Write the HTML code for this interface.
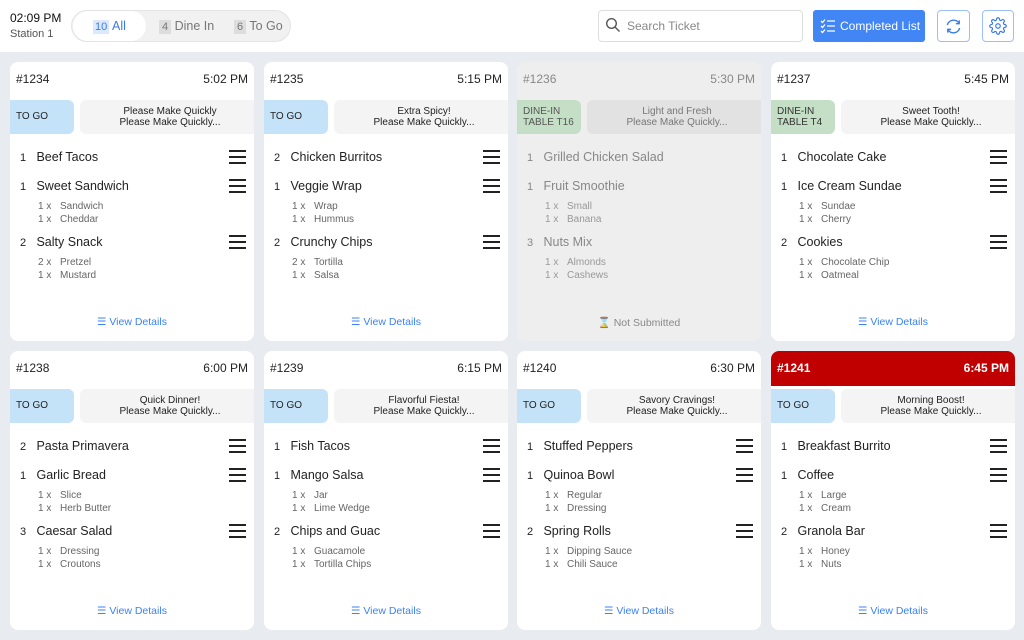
<!DOCTYPE html>
<html><head><meta charset="utf-8"><style>
*{box-sizing:border-box;margin:0;padding:0}
body{width:1024px;height:640px;background:#e8ebef;font-family:"Liberation Sans",sans-serif;position:relative;overflow:hidden;color:#222}
.hdr{position:absolute;left:0;top:0;width:1024px;height:52px;background:#fff}
.a{position:absolute}
.card{position:absolute;width:244px;height:279px;background:#fff;border-radius:8px;overflow:hidden}
.card.dim{background:#eeeeee;color:#888}
.num{position:absolute;left:6px;top:10px;font-size:12px}
.tm{position:absolute;right:6px;top:10px;font-size:12px}
.tag{position:absolute;left:0;top:38px;width:64px;height:34px;background:#c5e3f8;border-radius:0 6px 6px 0;font-size:10px;padding:11px 0 0 6px;color:#222}
.tag.din{background:#c4dfc6;padding:6px 0 0 6px;line-height:11px;color:#333}
.note{position:absolute;left:70px;top:38px;width:180px;height:34px;background:#f4f4f4;border-radius:6px;font-size:10px;text-align:center;line-height:11px;padding-top:6px;color:#222}
.dim .note{background:#e2e2e2;color:#777}
.dim .tag{color:#555}
.it{position:absolute;left:10px;font-size:12.5px;width:228px}
.it b{font-weight:normal;display:inline-block;width:13px;font-size:11px}
.ham{position:absolute;right:8px;width:17px;height:14px;border-top:2px solid #222;border-bottom:2px solid #222}
.ham:after{content:"";position:absolute;left:0;right:0;top:4px;border-top:2px solid #222}
.dim .ham{display:none}
.md{position:absolute;left:28px;font-size:10px;color:#666}
.md span{display:inline-block;width:22px}
.dim .md{color:#999}
.vd{position:absolute;left:0;width:244px;top:254px;text-align:center;font-size:10.5px;color:#3b82f6}
.dim .vd{color:#888}
</style></head><body>
<div class="hdr">
 <div class="a" style="left:10px;top:11px;font-size:12px;color:#111">02:09 PM</div>
 <div class="a" style="left:10px;top:28px;font-size:11px;color:#555">Station 1</div>
 <div class="a" style="left:71px;top:10px;width:220px;height:32px;background:#f1f1f2;border:1px solid #e4e4e4;border-radius:16px"></div>
 <div class="a" style="left:73px;top:11px;width:73px;height:30px;background:#fff;border-radius:15px"></div>
 <div class="a" style="left:93px;top:19px;font-size:12.5px;color:#3b7be8"><span style="background:#dce8fb;font-size:11px;padding:1px 2px">10</span> All</div>
 <div class="a" style="left:159px;top:19px;font-size:12.5px;color:#777"><span style="background:#ddd;font-size:11px;padding:1px 3px">4</span> Dine In</div>
 <div class="a" style="left:234px;top:19px;font-size:12.5px;color:#777"><span style="background:#ddd;font-size:11px;padding:1px 3px">6</span> To Go</div>
 <div class="a" style="left:598px;top:10px;width:205px;height:32px;border:1px solid #ddd;border-radius:4px"></div>
 <svg class="a" style="left:605px;top:17px" width="16" height="16" viewBox="0 0 16 16"><circle cx="6.5" cy="6.5" r="4.8" fill="none" stroke="#555" stroke-width="1.4"/><path d="M10 10l4.5 4.5" stroke="#555" stroke-width="1.4"/></svg>
 <div class="a" style="left:627px;top:19px;font-size:12px;color:#888">Search Ticket</div>
 <div class="a" style="left:813px;top:10px;width:112px;height:32px;background:#4285f4;border-radius:3px;color:#fff;font-size:12px;padding:9px 0 0 27px">Completed List</div>
 <svg class="a" style="left:820px;top:18px" width="16" height="16" viewBox="0 0 16 16" fill="none" stroke="#fff" stroke-width="1.3"><path d="M1 3l1.5 1.5L5 1.5M1 8l1.5 1.5L5 6.5M1 13l1.5 1.5L5 11.5M7 3h8M7 8h8M7 13h8"/></svg>
 <div class="a" style="left:937px;top:10px;width:33px;height:32px;border:1px solid #9cc0f5;border-radius:4px"></div>
 <svg class="a" style="left:944px;top:17px" width="19" height="19" viewBox="0 0 20 20" fill="none" stroke="#3b7be8" stroke-width="1.5"><path d="M3.5 8.5A6.7 6.7 0 0 1 16 7M16.5 11.5A6.7 6.7 0 0 1 4 13M16 3.5V7h-3.5M4 16.5V13h3.5"/></svg>
 <div class="a" style="left:982px;top:10px;width:32px;height:32px;border:1px solid #9cc0f5;border-radius:4px"></div>
 <svg class="a" style="left:989px;top:17px" width="18" height="18" viewBox="0 0 24 24" fill="none" stroke="#3b7be8" stroke-width="1.6"><circle cx="12" cy="12" r="3"/><path d="M19.4 15a1.7 1.7 0 0 0 .3 1.8l.1.1a2 2 0 1 1-2.8 2.8l-.1-.1a1.7 1.7 0 0 0-1.8-.3 1.7 1.7 0 0 0-1 1.5V21a2 2 0 1 1-4 0v-.1a1.7 1.7 0 0 0-1.1-1.500 1.7 1.7 0 0 0-1.8.3l-.1.1a2 2 0 1 1-2.8-2.8l.1-.1a1.7 1.7 0 0 0 .3-1.8 1.7 1.7 0 0 0-1.5-1H3a2 2 0 1 1 0-4h.1a1.7 1.7 0 0 0 1.5-1.1 1.7 1.7 0 0 0-.3-1.8l-.1-.1a2 2 0 1 1 2.8-2.8l.1.1a1.7 1.7 0 0 0 1.8.3H9a1.7 1.7 0 0 0 1-1.5V3a2 2 0 1 1 4 0v.1a1.7 1.7 0 0 0 1 1.5 1.7 1.7 0 0 0 1.8-.3l.1-.1a2 2 0 1 1 2.8 2.8l-.1.1a1.7 1.7 0 0 0-.3 1.8V9a1.7 1.7 0 0 0 1.5 1H21a2 2 0 1 1 0 4h-.1a1.7 1.7 0 0 0-1.5 1z"/></svg>
</div>

<!-- Row 1 -->
<div class="card" style="left:10px;top:62px">
 <div class="num">#1234</div><div class="tm">5:02 PM</div>
 <div class="tag">TO GO</div><div class="note">Please Make Quickly<br>Please Make Quickly...</div>
 <div class="it" style="top:88px"><b>1</b> Beef Tacos</div><div class="ham" style="top:88px"></div>
 <div class="it" style="top:117px"><b>1</b> Sweet Sandwich</div><div class="ham" style="top:117px"></div>
 <div class="md" style="top:139px"><span>1 x</span>Sandwich</div><div class="md" style="top:152px"><span>1 x</span>Cheddar</div>
 <div class="it" style="top:173px"><b>2</b> Salty Snack</div><div class="ham" style="top:173px"></div>
 <div class="md" style="top:195px"><span>2 x</span>Pretzel</div><div class="md" style="top:208px"><span>1 x</span>Mustard</div>
 <div class="vd">☰ View Details</div>
</div>
<div class="card" style="left:264px;top:62px">
 <div class="num">#1235</div><div class="tm">5:15 PM</div>
 <div class="tag">TO GO</div><div class="note">Extra Spicy!<br>Please Make Quickly...</div>
 <div class="it" style="top:88px"><b>2</b> Chicken Burritos</div><div class="ham" style="top:88px"></div>
 <div class="it" style="top:117px"><b>1</b> Veggie Wrap</div><div class="ham" style="top:117px"></div>
 <div class="md" style="top:139px"><span>1 x</span>Wrap</div><div class="md" style="top:152px"><span>1 x</span>Hummus</div>
 <div class="it" style="top:173px"><b>2</b> Crunchy Chips</div><div class="ham" style="top:173px"></div>
 <div class="md" style="top:195px"><span>2 x</span>Tortilla</div><div class="md" style="top:208px"><span>1 x</span>Salsa</div>
 <div class="vd">☰ View Details</div>
</div>
<div class="card dim" style="left:517px;top:62px">
 <div class="num">#1236</div><div class="tm">5:30 PM</div>
 <div class="tag din">DINE-IN<br>TABLE T16</div><div class="note">Light and Fresh<br>Please Make Quickly...</div>
 <div class="it" style="top:88px"><b>1</b> Grilled Chicken Salad</div>
 <div class="it" style="top:117px"><b>1</b> Fruit Smoothie</div>
 <div class="md" style="top:139px"><span>1 x</span>Small</div><div class="md" style="top:152px"><span>1 x</span>Banana</div>
 <div class="it" style="top:173px"><b>3</b> Nuts Mix</div>
 <div class="md" style="top:195px"><span>1 x</span>Almonds</div><div class="md" style="top:208px"><span>1 x</span>Cashews</div>
 <div class="vd">⌛ Not Submitted</div>
</div>
<div class="card" style="left:771px;top:62px">
 <div class="num">#1237</div><div class="tm">5:45 PM</div>
 <div class="tag din">DINE-IN<br>TABLE T4</div><div class="note">Sweet Tooth!<br>Please Make Quickly...</div>
 <div class="it" style="top:88px"><b>1</b> Chocolate Cake</div><div class="ham" style="top:88px"></div>
 <div class="it" style="top:117px"><b>1</b> Ice Cream Sundae</div><div class="ham" style="top:117px"></div>
 <div class="md" style="top:139px"><span>1 x</span>Sundae</div><div class="md" style="top:152px"><span>1 x</span>Cherry</div>
 <div class="it" style="top:173px"><b>2</b> Cookies</div><div class="ham" style="top:173px"></div>
 <div class="md" style="top:195px"><span>1 x</span>Chocolate Chip</div><div class="md" style="top:208px"><span>1 x</span>Oatmeal</div>
 <div class="vd">☰ View Details</div>
</div>

<!-- Row 2 -->
<div class="card" style="left:10px;top:351px">
 <div class="num">#1238</div><div class="tm">6:00 PM</div>
 <div class="tag">TO GO</div><div class="note">Quick Dinner!<br>Please Make Quickly...</div>
 <div class="it" style="top:88px"><b>2</b> Pasta Primavera</div><div class="ham" style="top:88px"></div>
 <div class="it" style="top:117px"><b>1</b> Garlic Bread</div><div class="ham" style="top:117px"></div>
 <div class="md" style="top:139px"><span>1 x</span>Slice</div><div class="md" style="top:152px"><span>1 x</span>Herb Butter</div>
 <div class="it" style="top:173px"><b>3</b> Caesar Salad</div><div class="ham" style="top:173px"></div>
 <div class="md" style="top:195px"><span>1 x</span>Dressing</div><div class="md" style="top:208px"><span>1 x</span>Croutons</div>
 <div class="vd">☰ View Details</div>
</div>
<div class="card" style="left:264px;top:351px">
 <div class="num">#1239</div><div class="tm">6:15 PM</div>
 <div class="tag">TO GO</div><div class="note">Flavorful Fiesta!<br>Please Make Quickly...</div>
 <div class="it" style="top:88px"><b>1</b> Fish Tacos</div><div class="ham" style="top:88px"></div>
 <div class="it" style="top:117px"><b>1</b> Mango Salsa</div><div class="ham" style="top:117px"></div>
 <div class="md" style="top:139px"><span>1 x</span>Jar</div><div class="md" style="top:152px"><span>1 x</span>Lime Wedge</div>
 <div class="it" style="top:173px"><b>2</b> Chips and Guac</div><div class="ham" style="top:173px"></div>
 <div class="md" style="top:195px"><span>1 x</span>Guacamole</div><div class="md" style="top:208px"><span>1 x</span>Tortilla Chips</div>
 <div class="vd">☰ View Details</div>
</div>
<div class="card" style="left:517px;top:351px">
 <div class="num">#1240</div><div class="tm">6:30 PM</div>
 <div class="tag">TO GO</div><div class="note">Savory Cravings!<br>Please Make Quickly...</div>
 <div class="it" style="top:88px"><b>1</b> Stuffed Peppers</div><div class="ham" style="top:88px"></div>
 <div class="it" style="top:117px"><b>1</b> Quinoa Bowl</div><div class="ham" style="top:117px"></div>
 <div class="md" style="top:139px"><span>1 x</span>Regular</div><div class="md" style="top:152px"><span>1 x</span>Dressing</div>
 <div class="it" style="top:173px"><b>2</b> Spring Rolls</div><div class="ham" style="top:173px"></div>
 <div class="md" style="top:195px"><span>1 x</span>Dipping Sauce</div><div class="md" style="top:208px"><span>1 x</span>Chili Sauce</div>
 <div class="vd">☰ View Details</div>
</div>
<div class="card" style="left:771px;top:351px">
 <div class="a" style="left:0;top:0;width:244px;height:35px;background:#c00000"></div>
 <div class="num" style="color:#fff;font-weight:bold">#1241</div><div class="tm" style="color:#fff;font-weight:bold">6:45 PM</div>
 <div class="tag">TO GO</div><div class="note">Morning Boost!<br>Please Make Quickly...</div>
 <div class="it" style="top:88px"><b>1</b> Breakfast Burrito</div><div class="ham" style="top:88px"></div>
 <div class="it" style="top:117px"><b>1</b> Coffee</div><div class="ham" style="top:117px"></div>
 <div class="md" style="top:139px"><span>1 x</span>Large</div><div class="md" style="top:152px"><span>1 x</span>Cream</div>
 <div class="it" style="top:173px"><b>2</b> Granola Bar</div><div class="ham" style="top:173px"></div>
 <div class="md" style="top:195px"><span>1 x</span>Honey</div><div class="md" style="top:208px"><span>1 x</span>Nuts</div>
 <div class="vd">☰ View Details</div>
</div>
</body></html>
